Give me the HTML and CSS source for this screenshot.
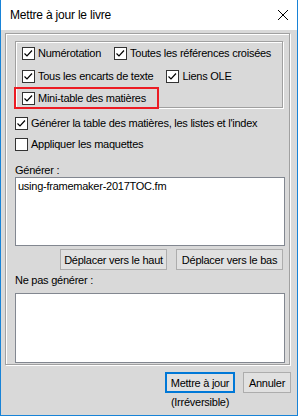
FILE: index.html
```html
<!DOCTYPE html>
<html lang="fr">
<head>
  <meta charset="UTF-8" />
  <title>Mettre à jour le livre</title>
  <link rel="stylesheet" href="styles.css">
</head>
<body>
  <div class="window">
    <div class="titlebar">
      <span class="title">Mettre à jour le livre</span>
      <svg class="close" width="10" height="10" viewBox="0 0 10 10">
        <path d="M0 0 L10 10 M10 0 L0 10" stroke="#000" stroke-width="1" fill="none"/>
      </svg>
    </div>

    <div class="content">
      <div class="group outer">
        <div class="group inner">
          <div class="row">
            <label class="check"><span class="box"><svg viewBox="0 0 11 11"><polyline points="1.5,5.5 4,8 9,2.5"/></svg></span>Numérotation</label>
            <label class="check"><span class="box"><svg viewBox="0 0 11 11"><polyline points="1.5,5.5 4,8 9,2.5"/></svg></span>Toutes les références croisées</label>
          </div>
          <div class="row">
            <label class="check"><span class="box"><svg viewBox="0 0 11 11"><polyline points="1.5,5.5 4,8 9,2.5"/></svg></span>Tous les encarts de texte</label>
            <label class="check"><span class="box"><svg viewBox="0 0 11 11"><polyline points="1.5,5.5 4,8 9,2.5"/></svg></span>Liens OLE</label>
          </div>
          <div class="row">
            <label class="check"><span class="box"><svg viewBox="0 0 11 11"><polyline points="1.5,5.5 4,8 9,2.5"/></svg></span>Mini-table des matières</label>
          </div>
          <div class="highlight"></div>
        </div>

        <label class="check option first"><span class="box"><svg viewBox="0 0 11 11"><polyline points="1.5,5.5 4,8 9,2.5"/></svg></span>Générer la table des matières, les listes et l'index</label>
        <label class="check option"><span class="box"></span>Appliquer les maquettes</label>

        <div class="field-label">Générer :</div>
        <div class="listbox">
          <div class="item">using-framemaker-2017TOC.fm</div>
        </div>

        <div class="move-buttons">
          <button class="btn move">Déplacer vers le haut</button>
          <button class="btn move">Déplacer vers le bas</button>
        </div>

        <div class="field-label second">Ne pas générer :</div>
        <div class="listbox short"></div>
      </div>

      <div class="footer">
        <div class="primary">
          <button class="btn default">Mettre à jour</button>
          <span class="note">(Irréversible)</span>
        </div>
        <button class="btn cancel">Annuler</button>
      </div>
    </div>
  </div>
</body>
</html>
```

FILE: styles.css
```css
body {
  margin: 0;
  background: #fff;
}

.window {
  width: 298px;
  height: 416px;
  box-sizing: border-box;
  border: 1px solid #1883d7;
  border-top: none;
  background: #d9d9d9;
  font-family: "Liberation Sans", Arial, sans-serif;
  font-size: 11px;
  letter-spacing: -0.25px;
  color: #000;
}

.titlebar {
  height: 30px;
  background: #fff;
  display: flex;
  align-items: center;
  justify-content: space-between;
  padding: 0 9px;
}

.title {
  font-size: 12px;
  letter-spacing: -0.2px;
}

.content {
  padding: 3px 6px 0 4px;
}

.group {
  border: 1px solid #a0a0a0;
  box-shadow: 1px 1px 0 #fff, inset 1px 1px 0 #fff;
}

.outer {
  width: 285px;
  box-sizing: border-box;
  padding: 7px 4px 1px 9px;
}

.inner {
  position: relative;
  width: 268px;
  box-sizing: border-box;
  padding: 5px 6px 2px;
  display: flex;
  flex-direction: column;
  gap: 9.5px;
}

.row {
  display: flex;
  gap: 13px;
}

.check {
  display: flex;
  align-items: center;
  gap: 3px;
  line-height: 13px;
  white-space: nowrap;
}

.box {
  width: 13px;
  height: 13px;
  box-sizing: border-box;
  border: 1px solid #333;
  background: #fff;
  flex: none;
}

.box svg {
  display: block;
  width: 11px;
  height: 11px;
}

.box polyline {
  fill: none;
  stroke: #000;
  stroke-width: 1.2;
}

/* annotation frame drawn over the dialog */
.highlight {
  position: absolute;
  left: -2px;
  top: 45px;
  width: 145px;
  height: 22px;
  box-sizing: border-box;
  border: 2px solid #ec1c24;
}

.option {
  margin-top: 8px;
}

.option.first {
  margin-top: 9px;
}

.field-label {
  line-height: 13px;
  margin-top: 13px;
}

.field-label.second {
  margin-top: 4px;
  margin-bottom: 6px;
}

.listbox {
  height: 69px;
  box-sizing: border-box;
  border: 1px solid #828790;
  background: #fff;
  padding: 1px 1px;
}

.listbox.short {
  height: 70px;
}

.item {
  line-height: 13px;
  padding: 1px 1px;
}

.btn {
  height: 21px;
  box-sizing: border-box;
  border: 1px solid #adadad;
  background: #e1e1e1;
  font-family: inherit;
  font-size: 11px;
  letter-spacing: -0.25px;
  color: #000;
  padding: 0;
  margin: 0;
}

.move-buttons {
  display: flex;
  justify-content: flex-end;
  gap: 9px;
  margin-top: 3px;
  padding-right: 2px;
}

.btn.move {
  width: 107px;
}

.footer {
  display: flex;
  justify-content: flex-end;
  align-items: flex-start;
  gap: 8px;
  margin-top: 7px;
  width: 286px;
}

.primary {
  display: flex;
  flex-direction: column;
  align-items: center;
}

.btn.default {
  width: 70px;
  border: 2px solid #0078d7;
}

.btn.cancel {
  width: 48px;
}

.note {
  margin-top: 3px;
  line-height: 13px;
}
```
